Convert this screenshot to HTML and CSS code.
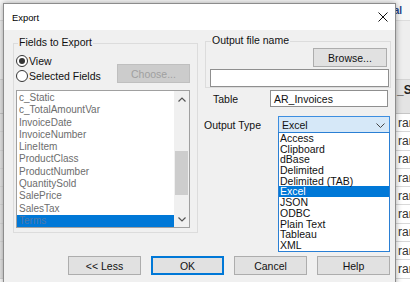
FILE: index.html
```html
<!DOCTYPE html>
<html>
<head>
<meta charset="utf-8">
<link rel="stylesheet" href="styles.css">
</head>
<body>
<div class="app">
  <div class="app-toolbar"><span class="tb-text">Total</span></div>
  <div class="app-ribbon"></div>
  <div class="app-head"><span>_Status</span></div>
  <div class="app-row"><span>rans</span></div>
  <div class="app-row"><span>rans</span></div>
  <div class="app-row"><span>rans</span></div>
  <div class="app-row"><span>rans</span></div>
  <div class="app-row"><span>rans</span></div>
  <div class="app-row"><span>rans</span></div>
  <div class="app-row"><span>rans</span></div>
  <div class="app-row"><span>rans</span></div>
  <div class="app-row"><span>rans</span></div>
</div>

<div class="dialog">
  <div class="titlebar">
    <span class="title">Export</span>
    <svg class="close" width="10" height="10" viewBox="0 0 10 10"><path d="M0.5 0.5 L9.5 9.5 M9.5 0.5 L0.5 9.5" stroke="#111" stroke-width="1" fill="none"/></svg>
  </div>
  <div class="dlg-body">
    <div class="top-row">
      <div class="group group-fields">
        <span class="legend">Fields to Export</span>
        <div class="choice-row">
          <div class="radios">
            <label class="radio"><span class="circle checked"></span>View</label>
            <label class="radio"><span class="circle"></span>Selected Fields</label>
          </div>
          <button class="btn btn-disabled btn-choose">Choose...</button>
        </div>
        <div class="listbox">
          <div class="items">
            <div class="item">c_Static</div>
            <div class="item">c_TotalAmountVar</div>
            <div class="item">InvoiceDate</div>
            <div class="item">InvoiceNumber</div>
            <div class="item">LineItem</div>
            <div class="item">ProductClass</div>
            <div class="item">ProductNumber</div>
            <div class="item">QuantitySold</div>
            <div class="item">SalePrice</div>
            <div class="item">SalesTax</div>
            <div class="item item-sel">Terms</div>
          </div>
          <div class="scrollbar">
            <div class="sb-arrow"><svg width="8" height="5" viewBox="0 0 8 5"><path d="M0.5 4.5 L4 1 L7.5 4.5" stroke="#555" stroke-width="1.2" fill="none"/></svg></div>
            <div class="sb-track"><div class="sb-thumb"></div></div>
            <div class="sb-arrow"><svg width="8" height="5" viewBox="0 0 8 5"><path d="M0.5 0.5 L4 4 L7.5 0.5" stroke="#555" stroke-width="1.2" fill="none"/></svg></div>
          </div>
        </div>
      </div>

      <div class="right-col">
        <div class="group group-out">
          <span class="legend">Output file name</span>
          <button class="btn btn-browse">Browse...</button>
          <div class="textbox tb-file"></div>
        </div>
        <div class="field-row">
          <span class="lbl lbl-table">Table</span>
          <div class="textbox tb-table">AR_Invoices</div>
        </div>
        <div class="field-row row-type">
          <span class="lbl lbl-type">Output Type</span>
          <div class="combo-wrap">
            <div class="combo">
              <span>Excel</span>
              <svg width="9" height="5" viewBox="0 0 9 5"><path d="M0.5 0.5 L4.5 4.5 L8.5 0.5" stroke="#444" stroke-width="1" fill="none"/></svg>
            </div>
            <div class="dropdown">
              <div class="dd-item">Access</div>
              <div class="dd-item">Clipboard</div>
              <div class="dd-item">dBase</div>
              <div class="dd-item">Delimited</div>
              <div class="dd-item">Delimited (TAB)</div>
              <div class="dd-item dd-sel">Excel</div>
              <div class="dd-item">JSON</div>
              <div class="dd-item">ODBC</div>
              <div class="dd-item">Plain Text</div>
              <div class="dd-item">Tableau</div>
              <div class="dd-item">XML</div>
            </div>
          </div>
        </div>
      </div>
    </div>

    <div class="btn-row">
      <button class="btn">&lt;&lt; Less</button>
      <button class="btn btn-default">OK</button>
      <button class="btn">Cancel</button>
      <button class="btn">Help</button>
    </div>
  </div>
</div>
</body>
</html>
```
FILE: styles.css
```css
html, body {
  margin: 0;
  padding: 0;
}
body {
  width: 410px;
  height: 282px;
  overflow: hidden;
  position: relative;
  font-family: "Liberation Sans Narrow", "Liberation Sans", Arial, sans-serif;
  font-size: 10.5px;
  color: #111;
}

/* background application */
.app {
  display: flex;
  flex-direction: column;
  height: 282px;
  overflow: hidden;
  background: #fff;
}
.app-toolbar {
  height: 20px;
  flex: none;
  background: #f7f7f7;
  border-bottom: 1px solid #dcdcdc;
  display: flex;
  align-items: center;
  padding-left: 379px;
  overflow: hidden;
  white-space: nowrap;
}
.tb-text {
  font-family: "Liberation Sans", sans-serif;
  font-weight: bold;
  font-size: 10px;
  color: #1d3f86;
}
.app-ribbon {
  height: 58px;
  flex: none;
  background: #eeeeee;
  border-bottom: 1px solid #d4d4d4;
}
.app-head {
  height: 34px;
  flex: none;
  background: #e4e4e4;
  border-bottom: 1px solid #c6c6c6;
  display: flex;
  align-items: flex-start;
  padding: 3px 0 0 397px;
  box-sizing: border-box;
  overflow: hidden;
  white-space: nowrap;
  font-family: "Liberation Sans", sans-serif;
  font-weight: bold;
  font-size: 12px;
  color: #222;
}
.app-row {
  height: 18.3px;
  flex: none;
  box-sizing: border-box;
  border-bottom: 1px solid #d9d9d9;
  display: flex;
  align-items: center;
  padding-left: 398px;
  overflow: hidden;
  white-space: nowrap;
  font-family: "Liberation Sans", sans-serif;
  font-size: 12px;
  color: #333;
  background: linear-gradient(to right, #e6e6e6 0 3px, #fff 3px);
}

/* dialog window */
.dialog {
  position: absolute;
  left: 3px;
  top: 3px;
  width: 393px;
  height: 300px;
  box-sizing: border-box;
  border: 1px solid #8c8c8c;
  background: #f0f0f0;
  box-shadow: 0 0 6px rgba(0, 0, 0, 0.35);
}
.titlebar {
  height: 26px;
  background: #fff;
  display: flex;
  align-items: center;
  justify-content: space-between;
  padding: 0 7px 0 8px;
}
.title {
  font-family: "Liberation Sans", Arial, sans-serif;
  font-size: 9.4px;
  color: #000;
}
.dlg-body {
  padding: 11px 0 0 9px;
}
.top-row {
  display: flex;
  align-items: flex-start;
  gap: 6px;
}

/* group boxes */
.group {
  box-sizing: border-box;
  border: 1px solid #dcdcdc;
  display: flex;
  flex-direction: column;
}
.legend {
  align-self: flex-start;
  margin-top: -8px;
  padding: 0 1px;
  line-height: 13px;
  background: #f0f0f0;
}
.group-fields {
  width: 185px;
  height: 190px;
  margin-top: 2px;
}
.group-fields .legend {
  margin-left: 4px;
}
.choice-row {
  display: flex;
  align-items: flex-start;
  margin-top: 4px;
}
.radios {
  display: flex;
  flex-direction: column;
  padding-left: 2px;
}
.radio {
  display: flex;
  align-items: center;
  gap: 1px;
  height: 15px;
}
.circle {
  width: 12px;
  height: 12px;
  box-sizing: border-box;
  border: 1px solid #333;
  border-radius: 50%;
  background: #fff;
  display: flex;
  align-items: center;
  justify-content: center;
}
.circle.checked::after {
  content: "";
  width: 6px;
  height: 6px;
  border-radius: 50%;
  background: #333;
}

/* buttons */
.btn {
  font: inherit;
  height: 19px;
  width: 73px;
  padding: 0;
  box-sizing: border-box;
  background: #e1e1e1;
  border: 1px solid #adadad;
  color: #111;
}
.btn-choose {
  margin: 11px 7px 0 auto;
}
.btn-disabled {
  background: #cccccc;
  border-color: #bfbfbf;
  color: #a0a0a0;
}
.btn-default {
  border: 1px solid #0078d7;
  box-shadow: inset 0 0 0 1px #0078d7;
}

/* listbox */
.listbox {
  width: 174px;
  height: 138px;
  margin: 7px 0 0 2px;
  box-sizing: border-box;
  border: 1px solid #a0a0a0;
  background: #fff;
  display: flex;
  overflow: hidden;
}
.items {
  flex: 1;
  padding-top: 1px;
  overflow: hidden;
  font-family: "Liberation Sans", Arial, sans-serif;
  font-size: 10px;
  color: #6d6d6d;
}
.item {
  height: 12.3px;
  line-height: 12.3px;
  padding-left: 2px;
  white-space: nowrap;
}
.item-sel {
  background: #0078d7;
  color: #4f79a8;
}
.scrollbar {
  width: 15px;
  background: #f0f0f0;
  display: flex;
  flex-direction: column;
}
.sb-arrow {
  height: 16px;
  display: flex;
  align-items: center;
  justify-content: center;
}
.sb-track {
  flex: 1;
}
.sb-thumb {
  margin: 44px 1px 0;
  height: 44px;
  background: #cdcdcd;
}

/* right column */
.right-col {
  width: 187px;
  display: flex;
  flex-direction: column;
}
.group-out {
  margin-left: 1px;
  height: 47px;
}
.group-out .legend {
  margin-left: 5px;
}
.btn-browse {
  align-self: flex-end;
  width: 74px;
  margin: 1px 3px 0 0;
}
.textbox {
  box-sizing: border-box;
  border: 1px solid #8f8f8f;
  background: #fff;
  padding-left: 3px;
  display: flex;
  align-items: center;
}
.tb-file {
  height: 18px;
  margin: 2px 1px 0 4px;
}
.field-row {
  display: flex;
  align-items: center;
  margin-top: 2px;
}
.lbl-table {
  width: 66px;
  padding-left: 9px;
  box-sizing: border-box;
}
.tb-table {
  width: 118px;
  height: 17px;
}
.row-type {
  margin-top: 9px;
}
.lbl-type {
  width: 74px;
}
.combo-wrap {
  position: relative;
}
.combo {
  width: 112px;
  height: 18px;
  box-sizing: border-box;
  border: 1px solid #3d8ee0;
  background: #d6e8f8;
  display: flex;
  align-items: center;
  justify-content: space-between;
  padding: 0 4px 0 3px;
}
.dropdown {
  position: absolute;
  left: 0;
  top: calc(100% - 2px);
  width: 112px;
  box-sizing: border-box;
  border: 1px solid #2a7fd4;
  background: #fff;
}
.dd-item {
  height: 10.7px;
  line-height: 10.7px;
  padding-left: 1px;
  white-space: nowrap;
}
.dd-sel {
  background: #0078d7;
  color: #fff;
}

/* bottom buttons */
.btn-row {
  display: flex;
  justify-content: flex-end;
  gap: 10px;
  margin-top: 23px;
  padding-right: 5px;
}
```
